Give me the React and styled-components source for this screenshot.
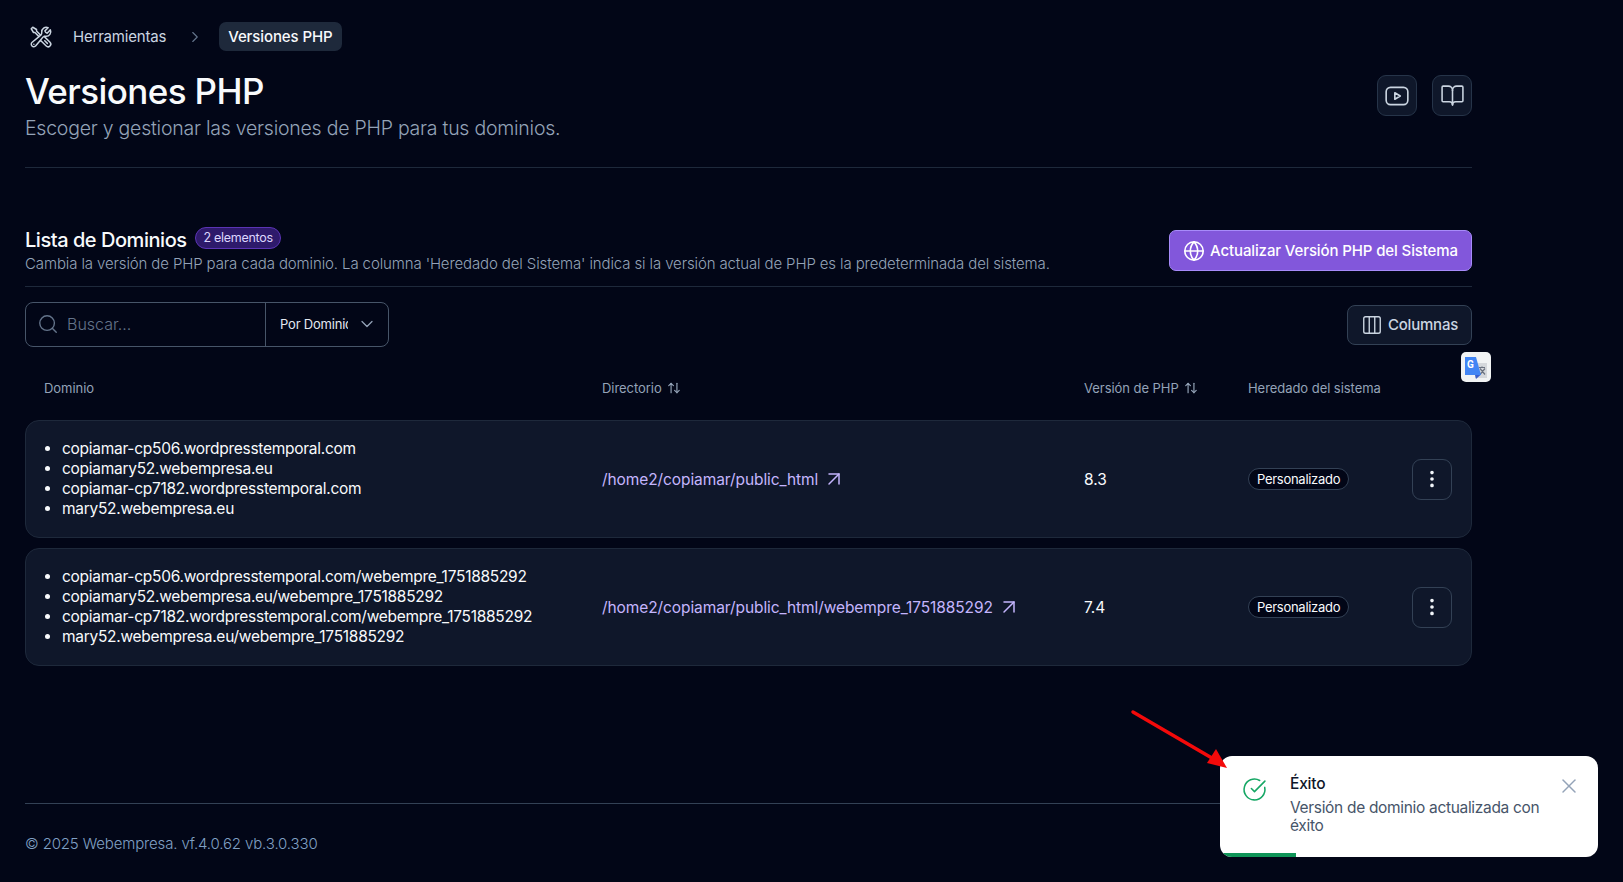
import { createGlobalStyle } from 'styled-components';
import styled from 'styled-components';
import {
  ArrowUpDown,
  ArrowUpRight,
  BookOpen,
  ChevronDown,
  ChevronRight,
  CircleCheckBig,
  Columns3,
  EllipsisVertical,
  Globe,
  Search,
  X,
} from 'lucide-react';
import { TbBrandYoutube } from 'react-icons/tb';
import { HiOutlineWrenchScrewdriver } from 'react-icons/hi2';

const GlobalStyle = createGlobalStyle`
  * { box-sizing: border-box; }
  body {
    margin: 0;
    background: #020617;
    font-family: Inter, "Noto Sans", sans-serif;
    color: #f8fafc;
  }
`;

const Page = styled.div`
  position: relative;
  height: 882px;
  overflow: hidden;
  padding: 22px 151px 0 25px;
  display: flex;
  flex-direction: column;
`;

const Breadcrumb = styled.nav`
  display: flex;
  align-items: center;
  height: 29px;
  font-size: 15px;
  padding-left: 4px;
  color: #cbd5e1;
`;

const Crumb = styled.span`
  margin-left: 20px;
  letter-spacing: -0.2px;
`;

const Current = styled.span`
  background: #1e293b;
  color: #f8fafc;
  height: 29px;
  line-height: 29px;
  border-radius: 7px;
  padding: 0 9px;
  font-weight: 500;
  letter-spacing: -0.1px;
`;

const Separator = styled.span`
  display: flex;
  color: #64748b;
  margin: 0 15px 0 20px;
`;

const Header = styled.header`
  display: flex;
  justify-content: space-between;
  align-items: flex-start;
  padding-top: 19px;
  height: 117px;
  border-bottom: 1px solid #1e293b;
`;

const Title = styled.h1`
  margin: 0;
  font-size: 35px;
  line-height: 42px;
  font-weight: 500;
  letter-spacing: -0.6px;
`;

const Subtitle = styled.p`
  margin: 2px 0 0;
  font-size: 19.5px;
  line-height: 28px;
  font-weight: 300;
  color: #94a3b8;
  letter-spacing: -0.24px;
`;

const HeaderActions = styled.div`
  display: flex;
  gap: 15px;
  margin-top: 5px;
`;

const IconButton = styled.button`
  width: 40px;
  height: 41px;
  padding: 0;
  display: flex;
  align-items: center;
  justify-content: center;
  border-radius: 9px;
  border: 1px solid ${(props) => (props.$plain ? '#334155' : '#263449')};
  background: ${(props) => (props.$plain ? 'transparent' : '#0f172a')};
  color: #cbd5e1;
`;

const SectionHead = styled.section`
  display: flex;
  justify-content: space-between;
  align-items: center;
  margin-top: 58px;
  height: 61px;
  padding-bottom: 11px;
  border-bottom: 1px solid #1e293b;
`;

const SectionTitleRow = styled.div`
  display: flex;
  align-items: center;
  gap: 8px;
`;

const SectionTitle = styled.h2`
  margin: 0;
  font-size: 20px;
  line-height: 24px;
  font-weight: 500;
  letter-spacing: -0.46px;
`;

const CountBadge = styled.span`
  height: 22px;
  line-height: 20px;
  margin-bottom: 3px;
  padding: 0 7px 0 8px;
  border-radius: 11px;
  border: 1px solid #5b34b5;
  background: #2e1a6b;
  color: #ddd6fe;
  font-size: 12.5px;
  letter-spacing: -0.3px;
`;

const SectionText = styled.p`
  margin: 2px 0 0;
  font-size: 15px;
  line-height: 20px;
  font-weight: 300;
  color: #94a3b8;
  letter-spacing: -0.12px;
`;

const PrimaryButton = styled.button`
  height: 41px;
  width: 303px;
  display: flex;
  align-items: center;
  justify-content: center;
  gap: 5px;
  padding-bottom: 1px;
  border-radius: 7px;
  border: 1px solid #a78bfa;
  background: #8257db;
  color: #fff;
  font-family: inherit;
  font-size: 15px;
  font-weight: 500;
  letter-spacing: -0.12px;
`;

const Toolbar = styled.div`
  display: flex;
  justify-content: space-between;
  align-items: center;
  margin-top: 15px;
`;

const SearchGroup = styled.div`
  display: flex;
  width: 364px;
  height: 45px;
  border: 1px solid #475569;
  border-radius: 8px;
`;

const SearchField = styled.div`
  display: flex;
  align-items: center;
  gap: 8px;
  width: 240px;
  padding: 0 0 1px 11px;
  color: #64748b;
  font-size: 16px;
  font-weight: 300;
  border-right: 1px solid #475569;
`;

const FilterSelect = styled.div`
  display: flex;
  align-items: center;
  flex: 1;
  padding: 0 0 1px 14px;
  color: #e2e8f0;
  font-size: 13px;
  letter-spacing: -0.2px;
`;

const FilterValue = styled.span`
  width: 68px;
  overflow: hidden;
  white-space: nowrap;
`;

const ChevronSlot = styled.span`
  display: flex;
  margin-left: 9px;
  color: #94a3b8;
`;

const ColumnsButton = styled.button`
  height: 40px;
  width: 125px;
  display: flex;
  align-items: center;
  justify-content: center;
  gap: 5px;
  padding-bottom: 1px;
  border-radius: 8px;
  border: 1px solid #334155;
  background: #0f172a;
  color: #cbd5e1;
  font-family: inherit;
  font-size: 15px;
  font-weight: 500;
  letter-spacing: -0.2px;
`;

const columns = '558px 482px 164px 164px 40px';

const TableHead = styled.div`
  display: grid;
  grid-template-columns: ${columns};
  align-items: center;
  height: 73px;
  padding: 8px 19px 0;
  color: #94a3b8;
  font-size: 13px;
  letter-spacing: -0.05px;
`;

const HeadCell = styled.span`
  display: flex;
  align-items: center;
  gap: 5px;
`;

const Rows = styled.div`
  display: flex;
  flex-direction: column;
  gap: 10px;
`;

const Row = styled.div`
  display: grid;
  grid-template-columns: ${columns};
  align-items: center;
  height: 118px;
  padding: 0 18px;
  background: #0f172a;
  border: 1px solid #1e293b;
  border-radius: 14px;
`;

const DomainList = styled.ul`
  margin: 0;
  padding-left: 18px;
  font-size: 15.5px;
  line-height: 20px;
  letter-spacing: -0.28px;
`;

const DirLink = styled.a`
  display: flex;
  align-items: center;
  gap: 4px;
  font-size: 15.5px;
  color: #c4b5fd;
  letter-spacing: -0.09px;
`;

const Version = styled.span`
  font-size: 15.5px;
`;

const OriginBadge = styled.span`
  justify-self: start;
  height: 22px;
  line-height: 20px;
  padding: 0 8px;
  border-radius: 11px;
  border: 1px solid #334155;
  background: #020617;
  font-size: 13px;
  letter-spacing: -0.28px;
`;

const Footer = styled.footer`
  margin-top: auto;
  height: 79px;
  border-top: 1px solid #334155;
  padding-top: 30px;
  font-size: 15px;
  line-height: 20px;
  font-weight: 300;
  color: #80a0c4;
  letter-spacing: -0.15px;
`;

const TranslateBadge = styled.div`
  position: absolute;
  left: 1461px;
  top: 352px;
  width: 30px;
  height: 30px;
  border-radius: 5px;
  background: #f1f3f4;
  display: flex;
  align-items: center;
  justify-content: center;
`;

const Toast = styled.div`
  position: absolute;
  left: 1220px;
  top: 756px;
  width: 378px;
  height: 101px;
  display: flex;
  padding: 21px 17px 0 22px;
  background: #fff;
  border-radius: 12px;
  overflow: hidden;
`;

const ToastBody = styled.div`
  margin-left: 23px;
  width: 256px;
`;

const ToastTitle = styled.div`
  color: #0f172a;
  font-size: 15.5px;
  font-weight: 500;
  line-height: 20px;
  letter-spacing: -0.2px;
  margin-top: -3px;
`;

const ToastText = styled.div`
  margin-top: 5px;
  color: #475569;
  font-size: 15.5px;
  line-height: 18px;
  letter-spacing: -0.32px;
`;

const ToastClose = styled.span`
  display: flex;
  margin: -3px 0 0 auto;
  color: #94a3b8;
`;

const ToastProgress = styled.span`
  position: absolute;
  left: 0;
  bottom: 0;
  height: 4px;
  background: #0f9558;
`;

const Annotation = styled.svg`
  position: absolute;
  left: 1125px;
  top: 705px;
`;

const rows = [
  {
    domains: [
      'copiamar-cp506.wordpresstemporal.com',
      'copiamary52.webempresa.eu',
      'copiamar-cp7182.wordpresstemporal.com',
      'mary52.webempresa.eu',
    ],
    dir: '/home2/copiamar/public_html',
    version: '8.3',
  },
  {
    domains: [
      'copiamar-cp506.wordpresstemporal.com/webempre_1751885292',
      'copiamary52.webempresa.eu/webempre_1751885292',
      'copiamar-cp7182.wordpresstemporal.com/webempre_1751885292',
      'mary52.webempresa.eu/webempre_1751885292',
    ],
    dir: '/home2/copiamar/public_html/webempre_1751885292',
    version: '7.4',
  },
];

export default function App() {
  return (
    <Page>
      <GlobalStyle />
      <Breadcrumb>
        <HiOutlineWrenchScrewdriver size={24} color="#cbd5e1" />
        <Crumb>Herramientas</Crumb>
        <Separator>
          <ChevronRight size={18} strokeWidth={1.5} />
        </Separator>
        <Current>Versiones PHP</Current>
      </Breadcrumb>

      <Header>
        <div>
          <Title>Versiones PHP</Title>
          <Subtitle>Escoger y gestionar las versiones de PHP para tus dominios.</Subtitle>
        </div>
        <HeaderActions>
          <IconButton>
            <TbBrandYoutube size={26} strokeWidth={1.5} />
          </IconButton>
          <IconButton>
            <BookOpen size={25} strokeWidth={1.5} />
          </IconButton>
        </HeaderActions>
      </Header>

      <SectionHead>
        <div>
          <SectionTitleRow>
            <SectionTitle>Lista de Dominios</SectionTitle>
            <CountBadge>2 elementos</CountBadge>
          </SectionTitleRow>
          <SectionText>
            Cambia la versión de PHP para cada dominio. La columna 'Heredado del Sistema' indica si
            la versión actual de PHP es la predeterminada del sistema.
          </SectionText>
        </div>
        <PrimaryButton>
          <Globe size={22} strokeWidth={1.75} />
          Actualizar Versión PHP del Sistema
        </PrimaryButton>
      </SectionHead>

      <Toolbar>
        <SearchGroup>
          <SearchField>
            <Search size={22} strokeWidth={1.5} />
            Buscar...
          </SearchField>
          <FilterSelect>
            <FilterValue>Por Dominio</FilterValue>
            <ChevronSlot>
              <ChevronDown size={20} strokeWidth={1.5} />
            </ChevronSlot>
          </FilterSelect>
        </SearchGroup>
        <ColumnsButton>
          <Columns3 size={22} strokeWidth={1.5} />
          Columnas
        </ColumnsButton>
      </Toolbar>

      <TableHead>
        <HeadCell>Dominio</HeadCell>
        <HeadCell>
          Directorio <ArrowUpDown size={14} />
        </HeadCell>
        <HeadCell>
          Versión de PHP <ArrowUpDown size={14} />
        </HeadCell>
        <HeadCell>Heredado del sistema</HeadCell>
      </TableHead>

      <Rows>
        {rows.map((row) => (
          <Row key={row.dir}>
            <DomainList>
              {row.domains.map((domain) => (
                <li key={domain}>{domain}</li>
              ))}
            </DomainList>
            <DirLink>
              {row.dir}
              <ArrowUpRight size={24} strokeWidth={1.5} />
            </DirLink>
            <Version>{row.version}</Version>
            <OriginBadge>Personalizado</OriginBadge>
            <IconButton $plain>
              <EllipsisVertical size={22} color="#f1f5f9" />
            </IconButton>
          </Row>
        ))}
      </Rows>

      <Footer>© 2025 Webempresa. vf.4.0.62 vb.3.0.330</Footer>

      <TranslateBadge>
        <svg width="24" height="24" viewBox="0 0 24 24">
          <rect x="11" y="8" width="12" height="15" fill="#d5d8dc" />
          <path d="M15 12.5h6M18 11.5v1M16 13.5l5 6M21 13.5l-5 6" stroke="#6b7280" strokeWidth="1.2" fill="none" />
          <path d="M1 2h11l5 18H1z" fill="#4285f4" />
          <path d="M11 20h5.5l-4.5 4z" fill="#3a5fcd" />
          <text x="3" y="13" fontSize="10" fontWeight="700" fontFamily="Roboto, sans-serif" fill="#fff">
            G
          </text>
        </svg>
      </TranslateBadge>

      <Toast>
        <CircleCheckBig size={25} color="#16a765" strokeWidth={1.5} />
        <ToastBody>
          <ToastTitle>Éxito</ToastTitle>
          <ToastText>Versión de dominio actualizada con éxito</ToastText>
        </ToastBody>
        <ToastClose>
          <X size={24} strokeWidth={1.5} />
        </ToastClose>
        <ToastProgress style={{ width: '20%' }} />
      </Toast>

      <Annotation width="110" height="72" viewBox="0 0 110 72">
        <line x1="8" y1="7" x2="92" y2="56" stroke="#f40a0a" strokeWidth="3.5" strokeLinecap="round" />
        <path d="M102 63 L82 58 L91 44 Z" fill="#f40a0a" />
      </Annotation>
    </Page>
  );
}
